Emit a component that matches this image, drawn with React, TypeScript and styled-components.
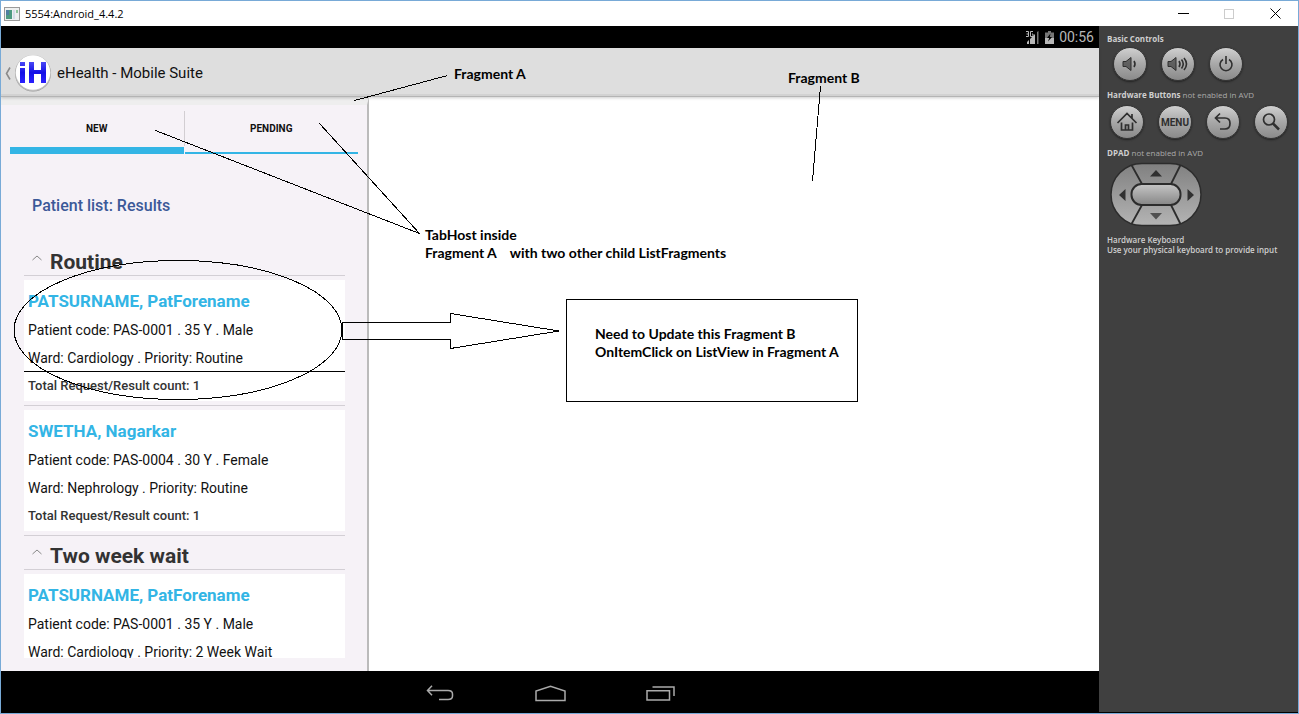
import React from "react";
import styled, { createGlobalStyle } from "styled-components";

const GlobalStyle = createGlobalStyle`
  * { box-sizing: border-box; }
  body { margin: 0; background: #fff; }
  button { margin: 0; padding: 0; border: 0; background: none; font: inherit; color: inherit; cursor: pointer; }
  h1, h2, h3, p, ul { margin: 0; padding: 0; }
  ul { list-style: none; }
  svg { display: block; flex: none; }
`;

const Window = styled.div`
  position: relative;
  display: flex;
  flex-direction: column;
  height: 100vh;
  overflow: hidden;
  border: 1px solid #78aad7;
  background: #fff;
  font-family: Roboto, sans-serif;
`;

/* Title bar */
const TitleBar = styled.header`
  display: flex;
  align-items: center;
  flex: none;
  height: 25px;
  padding-left: 3px;
  color: #000;
`;
const WindowTitle = styled.span`
  flex: 1;
  padding-left: 5px;
  font: 11px/16px "Open Sans", sans-serif;
`;
const WindowButton = styled.button`
  display: flex;
  align-items: center;
  justify-content: center;
  width: 46px;
  height: 25px;
`;

const Emulator = styled.div`
  display: flex;
  flex: 1;
  min-height: 0;
`;
const Device = styled.main`
  display: flex;
  flex-direction: column;
  flex: 1;
  min-width: 0;
`;

const StatusBar = styled.div`
  display: flex;
  align-items: center;
  justify-content: flex-end;
  gap: 5px;
  flex: none;
  height: 22px;
  padding-right: 5px;
  background: #000;
  color: #b8b8b8;
  font-size: 14px;
`;

const ActionBar = styled.div`
  display: flex;
  align-items: center;
  gap: 5px;
  flex: none;
  height: 49px;
  padding: 2px 0 0 4px;
  background: #dedede;
  border-bottom: 1px solid #b4b4b4;
  box-shadow: inset 0 -2px 0 #d2d2d2, 0 1px 3px rgba(0, 0, 0, 0.2);
  position: relative;
`;
const UpButton = styled.button`
  display: flex;
  align-items: center;
  gap: 3px;
`;
const AppTitle = styled.h1`
  font-size: 15px;
  font-weight: 400;
  line-height: 20px;
  color: #111;
`;

const Fragments = styled.div`
  display: flex;
  flex: 1;
  min-height: 0;
`;
const FragmentA = styled.section`
  display: flex;
  flex-direction: column;
  flex: 0 0 368px;
  padding-bottom: 13px;
  border-right: 2px solid #bbb;
  border-top: 8px solid #eeeeee;
  background: #f6f2f7;
`;
const FragmentB = styled.section`
  flex: 1;
  background: #fff;
`;

const Tabs = styled.div`
  display: flex;
  flex: none;
  margin: 6px 9px 0;
`;
const Tab = styled.button<{ $active?: boolean }>`
  flex: 1;
  height: 43px;
  padding-bottom: ${(p) => (p.$active ? "1px" : "6px")};
  border-bottom: ${(p) => (p.$active ? "7px" : "2px")} solid #33b5e5;
  font-size: 10px;
  font-weight: 700;
  line-height: 12px;
  color: #111;
`;
const TabRule = styled.span`
  width: 1px;
  height: 35px;
  background: #d2ced2;
`;

const ListHeading = styled.h2`
  flex: none;
  padding: 41px 31px 25px;
  font-size: 16px;
  font-weight: 500;
  line-height: 22px;
  color: #3b5998;
`;
const PatientList = styled.div`
  flex: 1;
  min-height: 0;
  margin: 0 22px 0 23px;
  overflow: hidden;
`;
const GroupHeader = styled.button`
  display: flex;
  align-items: center;
  gap: 8px;
  width: 100%;
  height: 34px;
  padding: 6px 8px 0;
  border-bottom: 1px solid #d3cfd5;
  text-align: left;
  font-size: 21px;
  font-weight: 700;
  line-height: 24px;
  color: #333;
`;
const Caret = styled.svg`
  margin-bottom: 8px;
`;
const Item = styled.li`
  padding: 4px 0;
  border-bottom: 1px solid #d3cfd5;
`;
const Card = styled.article`
  padding: 7px 4px 1px;
  background: #fff;
`;
const PatientName = styled.h3`
  padding-bottom: 1px;
  font-size: 17px;
  font-weight: 700;
  line-height: 28px;
  color: #33b5e5;
`;
const Detail = styled.p<{ $ruled?: boolean; $bold?: boolean }>`
  height: 28px;
  margin: 0 -4px;
  padding: 0 4px;
  border-bottom: ${(p) => (p.$ruled ? "1px solid #000" : "0")};
  font-size: ${(p) => (p.$bold ? "13px" : "14px")};
  font-weight: ${(p) => (p.$bold ? 500 : 400)};
  line-height: 28px;
  white-space: nowrap;
  color: ${(p) => (p.$bold ? "#333" : "#111")};
`;

const NavBar = styled.nav`
  display: flex;
  justify-content: center;
  flex: none;
  height: 42px;
  background: #000;
`;
const NavButton = styled.button`
  display: flex;
  align-items: center;
  justify-content: center;
  width: 110px;
  padding-top: 2px;
`;

/* Emulator control panel */
const Controls = styled.aside`
  flex: 0 0 199px;
  padding: 7px 8px 0;
  background: #404040;
  border-bottom: 1px solid #000;
  color: #cfcfcf;
`;
const ControlLabel = styled.p`
  font: 700 8px/12px "Open Sans", sans-serif;
  white-space: nowrap;
  span { font-weight: 400; color: #aaa; }
`;
const KeyRow = styled.div<{ $kind: "basic" | "hardware" | "dpad" }>`
  display: flex;
  gap: 14px;
  padding: ${(p) => ({ basic: "2px 0 8px 6px", hardware: "4px 0 8px 3px", dpad: "3px 0 7px 3px" })[p.$kind]};
`;
const Key = styled.button`
  display: flex;
  align-items: center;
  justify-content: center;
  flex: none;
  width: 34px;
  height: 34px;
  border: 1px solid #363636;
  border-radius: 50%;
  background: linear-gradient(#d0d0d0, #a8a8a8 50%, #8a8a8a);
  box-shadow: 0 1px 2px #222;
  color: #2f2f2f;
  font-size: 10px;
  font-weight: 700;
`;
const KeyboardNote = styled.div`
  p { font-weight: 600; line-height: 10px; }
`;

/* Notes laid over the emulator window */
const NoteLines = styled.svg`
  position: absolute;
  left: -1px;
  top: -1px;
  pointer-events: none;
`;
const Note = styled.p<{ $x: number; $y: number }>`
  position: absolute;
  left: ${(p) => p.$x}px;
  top: ${(p) => p.$y}px;
  font: 700 14px/18px Lato, sans-serif;
  white-space: pre;
  color: #000;
`;
const NoteBox = styled(Note)`
  width: 292px;
  height: 103px;
  padding: 25px 28px;
  border: 1px solid #000;
  background: #fff;
`;

type Patient = { name: string; code: string; ward: string; count?: number; ruled?: boolean };
const groups: { title: string; patients: Patient[] }[] = [
  {
    title: "Routine",
    patients: [
      { name: "PATSURNAME, PatForename", code: "PAS-0001 . 35 Y . Male", ward: "Cardiology . Priority: Routine", count: 1, ruled: true },
      { name: "SWETHA, Nagarkar", code: "PAS-0004 . 30 Y . Female", ward: "Nephrology . Priority: Routine", count: 1 },
    ],
  },
  {
    title: "Two week wait",
    patients: [
      { name: "PATSURNAME, PatForename", code: "PAS-0001 . 35 Y . Male", ward: "Cardiology . Priority: 2 Week Wait" },
    ],
  },
];

const stroke = { fill: "none", stroke: "currentColor" };

const WindowIcon = () => (
  <svg width="16" height="14" viewBox="0 0 16 14">
    <rect x="0.5" y="0.5" width="15" height="13" fill="#eef0f0" stroke="#9a9a9a" />
    <rect x="2" y="3" width="6" height="9" fill="#4d9a80" />
    <rect x="2" y="3" width="3" height="5" fill="#4f7fa0" />
    <rect x="9" y="3" width="2" height="9" fill="#d5dde8" />
    <rect x="12" y="3" width="2" height="3" fill="#8ec59c" />
  </svg>
);

const Logo = () => (
  <svg width="38" height="40" viewBox="0 0 38 40">
    <defs>
      <linearGradient id="ih" x1="0" y1="0" x2="0" y2="1">
        <stop offset="0" stopColor="#4a48f5" />
        <stop offset="0.5" stopColor="#1410e6" />
        <stop offset="1" stopColor="#2a20ff" />
      </linearGradient>
    </defs>
    <circle cx="19" cy="20.5" r="18" fill="#999" />
    <circle cx="19" cy="20" r="18" fill="#c0c0c0" />
    <circle cx="19" cy="19.5" r="17.2" fill="#fff" />
    <path d="M6 9H11V13H6ZM6 15H11V30H6ZM15 9H20V17H27V9H32V30H27V21H20V30H15Z" fill="url(#ih)" />
  </svg>
);

const SoundIcon = ({ loud }: { loud?: boolean }) => (
  <svg width="22" height="16" viewBox="0 0 22 16">
    <g transform={loud ? "" : "translate(3 0)"}>
      <path d="M1 5.500H4L9 1.500V14.500L4 10.500H1Z" fill="currentColor" fillOpacity="0.6" stroke="currentColor" />
      <path d="M12 5Q14 8 12 11" {...stroke} strokeWidth="1.6" />
      {loud && <path d="M14.500 3.500Q18 8 14.500 12.500M17 2Q22 8 17 14" {...stroke} strokeWidth="1.6" />}
    </g>
  </svg>
);

const Dpad = () => (
  <svg width="92" height="66" viewBox="0 0 92 66" role="img" aria-label="DPAD">
    <defs>
      <linearGradient id="pad" x1="0" y1="0" x2="0" y2="1">
        <stop offset="0" stopColor="#808080" />
        <stop offset="1" stopColor="#b4b4b4" />
      </linearGradient>
      <linearGradient id="ok" x1="0" y1="0" x2="0" y2="1">
        <stop offset="0" stopColor="#c6c6c6" />
        <stop offset="1" stopColor="#868686" />
      </linearGradient>
    </defs>
    <rect x="1" y="1.5" width="90" height="62" rx="31" fill="url(#pad)" stroke="#2c2c2c" strokeWidth="1.5" />
    <path d="M21.500 3L32 22M70.500 3L61 22M21.500 62L32 43M70.500 62L61 43" stroke="#2c2c2c" strokeWidth="1.8" />
    <rect x="21.5" y="22" width="49" height="21" rx="10" fill="url(#ok)" stroke="#2c2c2c" strokeWidth="2" />
    <path d="M40 14.500L46 8L52 14.500ZM9 33L15.500 27V39ZM84 33L77.500 27V39Z" fill="#303030" />
    <path d="M40 51L46 57.500L52 51Z" fill="#505050" />
  </svg>
);

export default function App() {
  return (
    <Window>
      <GlobalStyle />
      <TitleBar>
        <WindowIcon />
        <WindowTitle>5554:Android_4.4.2</WindowTitle>
        <WindowButton aria-label="Minimize">
          <svg width="11" height="11"><path d="M0 5.500H11" stroke="#000" /></svg>
        </WindowButton>
        <WindowButton aria-label="Maximize" disabled>
          <svg width="10" height="10"><rect x="0.5" y="0.5" width="9" height="9" fill="none" stroke="#ccc" /></svg>
        </WindowButton>
        <WindowButton aria-label="Close">
          <svg width="11" height="11"><path d="M0.500 0.500L10.500 10.500M10.500 0.500L0.500 10.500" stroke="#000" /></svg>
        </WindowButton>
      </TitleBar>

      <Emulator>
        <Device>
          <StatusBar>
            <svg width="15" height="15" viewBox="0 0 15 15">
              <path d="M1 1.500H3.500V6.500H1M1.500 4H3.500M8 1.500H5.500V6.500H8V4H7" {...stroke} />
              <path d="M2 14V12L4 10V14ZM5 14V9L10 4V14Z" fill="currentColor" />
              <path d="M12 14V2L13.500 1V14Z" fill="#777" />
            </svg>
            <svg width="9" height="13" viewBox="0 0 9 13">
              <path d="M3 0H6V1.500H9V7H0V1.500H3Z" fill="#777" />
              <path d="M0 7H9V13H0Z" fill="currentColor" />
              <path d="M5.500 2.500L2 7H4.200L3 10.500L7 6H4.800Z" fill="#000" />
            </svg>
            <span>00:56</span>
          </StatusBar>

          <ActionBar>
            <UpButton aria-label="Navigate up">
              <svg width="6" height="13" viewBox="0 0 6 13"><path d="M5 0.500L1.500 6.500L5 12.500" fill="none" stroke="#8a8a8a" strokeWidth="1.6" /></svg>
              <Logo />
            </UpButton>
            <AppTitle>eHealth - Mobile Suite</AppTitle>
          </ActionBar>

          <Fragments>
            <FragmentA>
              <Tabs role="tablist">
                <Tab role="tab" aria-selected $active>NEW</Tab>
                <TabRule />
                <Tab role="tab" aria-selected={false}>PENDING</Tab>
              </Tabs>
              <ListHeading>Patient list: Results</ListHeading>
              <PatientList>
                {groups.map((group) => (
                  <section key={group.title}>
                    <GroupHeader aria-expanded>
                      <Caret width="10" height="6" viewBox="0 0 10 6"><path d="M0.500 5L5 1L9.500 5" fill="none" stroke="#888" /></Caret>
                      {group.title}
                    </GroupHeader>
                    <ul>
                      {group.patients.map((p) => (
                        <Item key={p.name}>
                          <Card>
                            <PatientName>{p.name}</PatientName>
                            <Detail>Patient code: {p.code}</Detail>
                            <Detail $ruled={p.ruled}>Ward: {p.ward}</Detail>
                            {p.count !== undefined && <Detail $bold>Total Request/Result count: {p.count}</Detail>}
                          </Card>
                        </Item>
                      ))}
                    </ul>
                  </section>
                ))}
              </PatientList>
            </FragmentA>
            <FragmentB aria-label="Fragment B" />
          </Fragments>

          <NavBar>
            <NavButton aria-label="Back">
              <svg width="28" height="16" viewBox="0 0 28 16"><path d="M6 0.800L1.500 5.500L6 10.200M1.500 5.500H22Q26.500 5.500 26.500 9V11Q26.500 14.500 22 14.500H13" fill="none" stroke="#aaa" strokeWidth="1.5" /></svg>
            </NavButton>
            <NavButton aria-label="Home">
              <svg width="31" height="17" viewBox="0 0 31 17"><path d="M1 15.500V6L15.500 1.200L30 6V15.500Z" fill="none" stroke="#aaa" strokeWidth="1.5" /></svg>
            </NavButton>
            <NavButton aria-label="Recent apps">
              <svg width="29" height="15" viewBox="0 0 29 15"><path d="M1 4.800H23.500V14H1ZM6.500 1H28V10" fill="none" stroke="#aaa" strokeWidth="1.5" /></svg>
            </NavButton>
          </NavBar>
        </Device>

        <Controls>
          <ControlLabel>Basic Controls</ControlLabel>
          <KeyRow $kind="basic">
            <Key aria-label="Volume down"><SoundIcon /></Key>
            <Key aria-label="Volume up"><SoundIcon loud /></Key>
            <Key aria-label="Power">
              <svg width="16" height="18" viewBox="0 0 16 18"><path d="M5 4.500A6 6 0 1 0 11 4.500M8 1V9" {...stroke} strokeWidth="1.6" /></svg>
            </Key>
          </KeyRow>
          <ControlLabel>Hardware Buttons <span>not enabled in AVD</span></ControlLabel>
          <KeyRow $kind="hardware">
            <Key aria-label="Home">
              <svg width="22" height="20" viewBox="0 0 22 20"><path d="M1.500 11L11 1.500L20.500 11M16 6V2M5.500 10.500V18H16.500V10.500M9.500 18V13H12.500V18" {...stroke} strokeWidth="1.700" /></svg>
            </Key>
            <Key>MENU</Key>
            <Key aria-label="Back">
              <svg width="20" height="20" viewBox="0 0 20 20"><path d="M7 1.500L2.500 6L7 10.500M2.500 6H12Q17 6 17 11.500T12 17H7" {...stroke} strokeWidth="1.700" /></svg>
            </Key>
            <Key aria-label="Search">
              <svg width="20" height="20" viewBox="0 0 20 20"><circle cx="8" cy="7.500" r="5.500" {...stroke} strokeWidth="1.700" /><path d="M12 11.500L18 17.500" {...stroke} strokeWidth="2.500" /></svg>
            </Key>
          </KeyRow>
          <ControlLabel>DPAD <span>not enabled in AVD</span></ControlLabel>
          <KeyRow $kind="dpad"><Dpad /></KeyRow>
          <KeyboardNote>
            <ControlLabel>Hardware Keyboard</ControlLabel>
            <ControlLabel>Use your physical keyboard to provide input</ControlLabel>
          </KeyboardNote>
        </Controls>
      </Emulator>

      <Note $x={453} $y={64}>Fragment A</Note>
      <Note $x={787} $y={68}>Fragment B</Note>
      <Note $x={424} $y={225}>{"TabHost inside\nFragment A    with two other child ListFragments"}</Note>
      <NoteBox $x={565} $y={298}>{"Need to Update this Fragment B\nOnItemClick on ListView in Fragment A"}</NoteBox>
      <NoteLines width="860" height="410" fill="none" stroke="#000" shapeRendering="crispEdges">
        <path d="M354.500 100.500L447.500 75.500M155.500 130.500L419.500 233.500L319.500 123.500M820.500 86L812.500 181" />
        <ellipse cx="178" cy="330" rx="164" ry="69.500" />
        <path d="M342.500 322.500H450.500V313.500L559 331L450.500 348.500V339.500H342.500Z" />
      </NoteLines>
    </Window>
  );
}
